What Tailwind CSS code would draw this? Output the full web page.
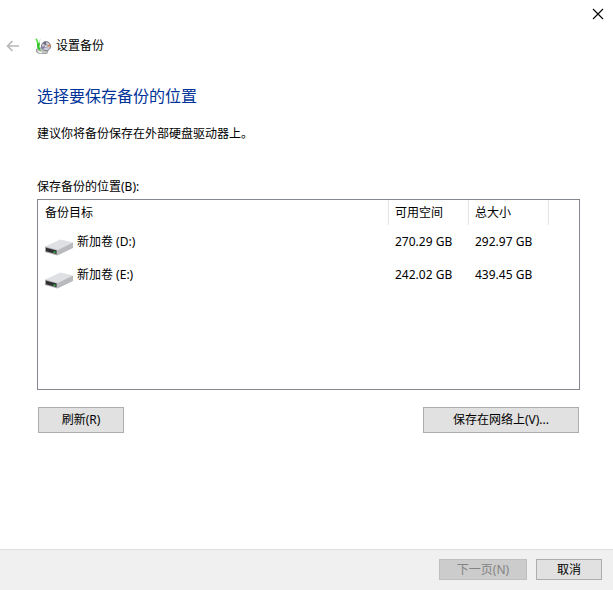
<!DOCTYPE html>
<html lang="zh-CN">
<head>
  <meta charset="UTF-8" />
  <meta name="viewport" content="width=device-width, initial-scale=1.0" />
  <title>设置备份</title>
  <script src="https://cdn.jsdelivr.net/npm/@tailwindcss/browser@4"></script>
</head>
<body class="bg-white text-black text-xs leading-4 min-h-screen flex flex-col font-['Noto_Sans','Noto_Sans_CJK_SC',sans-serif]">

  <!-- Title bar -->
  <header>
    <div class="flex justify-end">
      <button type="button" aria-label="关闭" class="w-[30px] h-7 flex items-center justify-center">
        <svg width="12" height="12" viewBox="0 0 12 12" fill="none" stroke="#000" stroke-width="1.1">
          <path d="M1 1l10 10M11 1L1 11" />
        </svg>
      </button>
    </div>
    <div class="flex items-center h-9 pl-1.5">
      <button type="button" aria-label="返回" disabled class="mr-4">
        <svg width="13" height="12" viewBox="0 0 13 12" fill="none" stroke="#b8b8b8" stroke-width="1.7">
          <path d="M13 6H1.5M6.5 1L1.5 6l5 5" />
        </svg>
      </button>
      <svg class="mr-1" width="17" height="17" viewBox="0 0 17 17">
        <path d="M1.500 11L7 9.500l6 3.500-1 2.500H4L1.500 14z" fill="#c4c7c4" stroke="#858a86" stroke-width=".7" />
        <path d="M3 13l4 1v1.200H4.500z" fill="#f4f4f4" />
        <circle cx="11" cy="8.200" r="4.600" fill="#c9cbdb" stroke="#74747c" stroke-width=".9" />
        <path d="M11 8.200L7.700 5a4.600 4.600 0 0 1 3.500-1.200z" fill="#6f7180" />
        <path d="M11 8.200l3.700-2.300a4.500 4.500 0 0 1 .5 3z" fill="#e08a60" />
        <path d="M11 8.200l-3.300 3.200a4.500 4.500 0 0 1-1.200-3z" fill="#8579a5" />
        <circle cx="11" cy="8.200" r="1.300" fill="#fff" stroke="#777" stroke-width=".6" />
        <path d="M.8 1C2.800 2.500 3 5 3.300 8" fill="none" stroke="#55e048" stroke-width="1.600" />
        <path d="M6 0L4 5.200h1.200C4.300 8 4 10 6.300 13 2.500 12 1.500 9 2.300 5.500L3.800 4.500z" fill="#2fc426" />
      </svg>
      <span>设置备份</span>
    </div>
  </header>

  <main class="flex-1 px-[37px] pt-5 pr-[33px]">
    <h1 class="text-base leading-6 text-[#003399]">选择要保存备份的位置</h1>
    <p class="mt-4.5">建议你将备份保存在外部硬盘驱动器上。</p>

    <h2 id="targets" class="mt-[37px] mb-1">保存备份的位置(B):</h2>
    <div class="border border-[#828790] h-[191px] overflow-auto">
      <table aria-labelledby="targets" class="w-full table-fixed text-left">
        <colgroup>
          <col />
          <col class="w-20" />
          <col class="w-20" />
          <col class="w-[30px]" />
        </colgroup>
        <thead>
          <tr class="h-[25px]">
            <th class="p-0 font-normal"><div class="h-[25px] leading-[26px] pl-[7px] border-r border-[#e5e5e5]">备份目标</div></th>
            <th class="p-0 font-normal"><div class="h-[25px] leading-[26px] pl-1.5 border-r border-[#e5e5e5]">可用空间</div></th>
            <th class="p-0 font-normal"><div class="h-[25px] leading-[26px] pl-1.5 border-r border-[#e5e5e5]">总大小</div></th>
            <td></td>
          </tr>
        </thead>
        <tbody>
          <tr class="h-[33px]">
            <td class="p-0 pl-[5px]">
              <div class="flex items-center gap-0.5">
                <svg width="32" height="32" viewBox="0 0 32 32">
                  <path d="M2 20.500L17.500 13.500 30 16.500 14.500 24z" fill="#dfe0e3" />
                  <path d="M14.500 24L30 16.500V22l-15.500 7.500z" fill="#b9babd" />
                  <path d="M2 20.500L14.500 24v5.500L2 26z" fill="#a2a3a5" />
                  <path d="M3 21.800l10.500 2.800v3.400L3 25.200z" fill="#2e2f31" />
                  <path d="M10.500 26l2 .5" stroke="#2fc04a" stroke-width="1.600" />
                </svg>
                <span>新加卷 (D:)</span>
              </div>
            </td>
            <td class="p-0 pl-1.5">270.29 GB</td>
            <td class="p-0 pl-1.5">292.97 GB</td>
            <td></td>
          </tr>
          <tr class="h-[33px]">
            <td class="p-0 pl-[5px]">
              <div class="flex items-center gap-0.5">
                <svg width="32" height="32" viewBox="0 0 32 32">
                  <path d="M2 20.500L17.500 13.500 30 16.500 14.500 24z" fill="#dfe0e3" />
                  <path d="M14.500 24L30 16.500V22l-15.500 7.500z" fill="#b9babd" />
                  <path d="M2 20.500L14.500 24v5.500L2 26z" fill="#a2a3a5" />
                  <path d="M3 21.800l10.500 2.800v3.400L3 25.200z" fill="#2e2f31" />
                  <path d="M10.500 26l2 .5" stroke="#2fc04a" stroke-width="1.600" />
                </svg>
                <span>新加卷 (E:)</span>
              </div>
            </td>
            <td class="p-0 pl-1.5">242.02 GB</td>
            <td class="p-0 pl-1.5">439.45 GB</td>
            <td></td>
          </tr>
        </tbody>
      </table>
    </div>

    <div class="flex justify-between mt-4 px-px pt-px">
      <button type="button" class="w-[86px] h-[26px] bg-[#e1e1e1] border border-[#adadad]">刷新(R)</button>
      <button type="button" class="w-[156px] h-[26px] bg-[#e1e1e1] border border-[#adadad]">保存在网络上(V)...</button>
    </div>
  </main>

  <footer class="flex justify-end gap-[9px] bg-[#f0f0f0] border-t border-[#dfdfdf] pt-[9px] pb-2.5 pr-[11px]">
    <button type="button" disabled class="w-[88px] h-[21px] bg-[#cccccc] border border-[#bfbfbf] text-[#838383]">下一页(N)</button>
    <button type="button" class="w-[66px] h-[21px] bg-[#e1e1e1] border border-[#adadad]">取消</button>
  </footer>

</body>
</html>
